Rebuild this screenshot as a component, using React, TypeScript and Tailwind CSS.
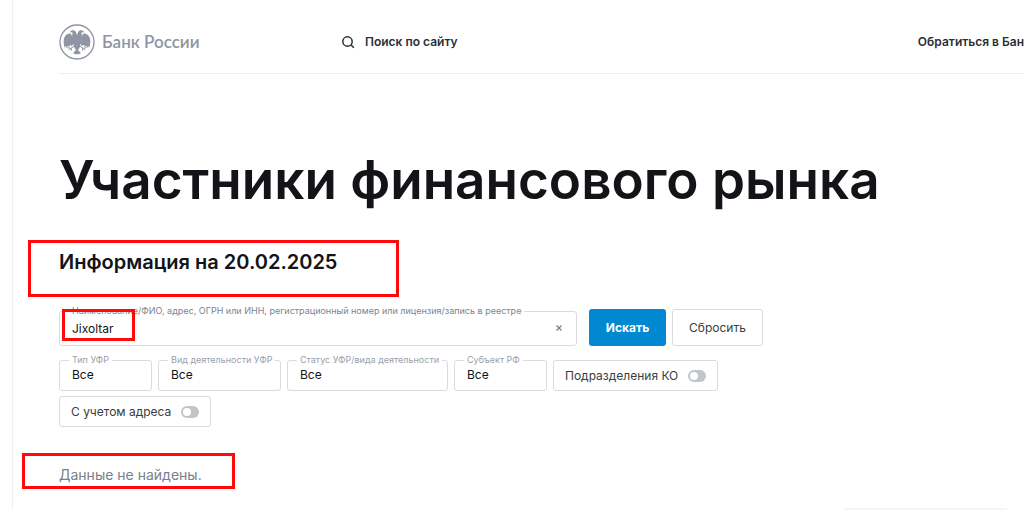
import { useState } from 'react';

const filters = [
  { id: 'type', label: 'Тип УФР', width: 'w-[93px]' },
  { id: 'activity', label: 'Вид деятельности УФР', width: 'w-[123px]' },
  { id: 'status', label: 'Статус УФР/вида деятельности', width: 'w-[161px]' },
  { id: 'region', label: 'Субъект РФ', width: 'w-[93px]' },
];

const Logo = () => (
  <a href="#" className="flex items-center gap-[7px] text-[#8f95a3]">
    <svg viewBox="0 0 108 108" className="size-9 shrink-0" aria-hidden="true">
      <circle cx="54" cy="54" r="51" fill="none" stroke="currentColor" strokeWidth="4" />
      <g fill="currentColor">
        {/* Heads and body */}
        <path d="M54 34 C52 28 51 21 44 19 C39 18 35 20 32 25 L39 25 C42 28 41 31 38 36 C42 39 44 43 44 47 L44 66 C46 72 50 75 51 78 L42 87 C47 92 61 92 66 87 L57 78 C58 75 62 72 64 66 L64 47 C64 43 66 39 70 36 C67 31 66 28 69 25 L76 25 C73 20 69 18 64 19 C57 21 56 28 54 34 Z" />
        {/* Wings */}
        <path d="M36 29 C25 26 15 36 14 50 C14 60 15 66 18 72 L20 66 L24 72 L26 65 L31 69 L33 62 L38 66 L46 58 L46 42 C42 41 38 36 36 29 Z" />
        <path d="M72 29 C83 26 93 36 94 50 C94 60 93 66 90 72 L88 66 L84 72 L82 65 L77 69 L75 62 L70 66 L62 58 L62 42 C66 41 70 36 72 29 Z" />
      </g>
      {/* Claws */}
      <g fill="none" stroke="currentColor" strokeWidth="3">
        <path d="M46 66 L36 73 L25 71 M36 73 L30 79 M36 73 L38 80" />
        <path d="M62 66 L72 73 L83 71 M72 73 L78 79 M72 73 L70 80" />
      </g>
    </svg>
    <span className="font-[Lato,sans-serif] text-[17px] leading-6 whitespace-nowrap">Банк России</span>
  </a>
);

const Toggle = ({ id, label }: { id: string; label: string }) => (
  <label htmlFor={id} className="flex h-[31px] items-center gap-[10px] rounded-[3px] border border-[#d9dbde] px-[11px] text-[12px] text-[#3a3d42] whitespace-nowrap">
    {label}
    <span className="relative flex">
      <input id={id} type="checkbox" className="peer h-3 w-[18px] appearance-none rounded-full bg-[#c1c5ca] checked:bg-[#0088d0]" />
      <span className="pointer-events-none absolute top-[2px] left-[2px] size-2 rounded-full bg-white peer-checked:left-2" />
    </span>
  </label>
);

export default function App() {
  const [query, setQuery] = useState('Jixoltar');

  return (
    <div className="relative ml-3 min-h-screen overflow-hidden border-l border-[#f0f1f2] bg-white pl-[46px] font-[Inter,sans-serif] text-[#121417]">
      <header className="flex h-[74px] items-center border-b border-[#ececee] pt-[10px] text-[12px] font-semibold text-[#2b2f36]">
        <div className="w-[282px] shrink-0">
          <Logo />
        </div>
        <button type="button" className="flex items-center gap-[10px] whitespace-nowrap">
          <svg viewBox="0 0 14 14" className="size-[14px]" fill="none" stroke="currentColor" strokeWidth="1.5" aria-hidden="true">
            <circle cx="6.5" cy="6.5" r="4.7" />
            <path d="M10 10 L12.8 12.8" />
          </svg>
          Поиск по сайту
        </button>
        <a href="#" className="ml-auto shrink-0 whitespace-nowrap">Обратиться в Бан</a>
      </header>

      <main>
        <h1 className="mt-[74px] text-[53px] leading-[64px] font-semibold whitespace-nowrap">
          Участники финансового рынка
        </h1>
        <h2 className="mt-[34px] text-[20px] leading-8 font-semibold">Информация на 20.02.2025</h2>

        <form className="mt-7 max-w-[704px]" onSubmit={(e) => e.preventDefault()}>
          <div className="flex items-end gap-[6px]">
            <fieldset className="mr-[6px] h-10 min-w-0 flex-1 rounded-[3px] border border-[#d9dbde] px-[9px]">
              <legend className="px-[3px] text-[9px] leading-[10px] text-[#7d848e] whitespace-nowrap">
                <label htmlFor="query">Наименование/ФИО, адрес, ОГРН или ИНН, регистрационный номер или лицензия/запись в реестре</label>
              </legend>
              <div className="flex items-center pr-1 pl-[3px]">
                <input
                  id="query"
                  type="text"
                  value={query}
                  onChange={(e) => setQuery(e.target.value)}
                  className="h-6 min-w-0 flex-1 text-[12px] outline-none"
                />
                <button type="button" aria-label="Очистить" className="text-[#7d848e]" onClick={() => setQuery('')}>
                  <svg viewBox="0 0 8 8" className="size-2" stroke="currentColor" strokeWidth="1.4" aria-hidden="true">
                    <path d="M1.5 1.5 L6.5 6.5 M6.5 1.5 L1.5 6.5" />
                  </svg>
                </button>
              </div>
            </fieldset>
            <button type="submit" className="h-[37px] w-[77px] rounded-[3px] bg-[#0088d0] text-[12px] font-bold text-white">
              Искать
            </button>
            <button type="reset" className="h-[37px] w-[91px] rounded-[3px] border border-[#d9dbde] text-[12px] text-[#3a3d42]">
              Сбросить
            </button>
          </div>

          <div className="mt-[9px] flex flex-wrap items-end gap-x-[6px] gap-y-[5px]">
            {filters.map((f) => (
              <fieldset key={f.id} className={`h-9 min-w-0 rounded-[3px] border border-[#d9dbde] px-[9px] ${f.width}`}>
                <legend className="px-[3px] text-[9px] leading-[10px] text-[#9aa0a8] whitespace-nowrap">
                  <label htmlFor={f.id}>{f.label}</label>
                </legend>
                <select id={f.id} className="block h-5 w-full appearance-none pl-[3px] text-[12px] leading-5 outline-none">
                  <option>Все</option>
                </select>
              </fieldset>
            ))}
            <Toggle id="branches" label="Подразделения КО" />
            <Toggle id="address" label="С учетом адреса" />
          </div>
        </form>

        <p className="mt-[38px] text-[14px] leading-5 text-[#79808b]">Данные не найдены.</p>
        <div className="mt-[23px] mr-4 ml-auto h-1 w-[165px] rounded-t-sm bg-[#f5f5f6]" />
      </main>

      {/* Highlight frames */}
      <div className="pointer-events-none absolute top-[240px] left-[15px] h-[57px] w-[371px] border-3 border-[#ff0a0a]" />
      <div className="pointer-events-none absolute top-[309px] left-[49px] h-[32px] w-[73px] border-3 border-[#ff0a0a]" />
      <div className="pointer-events-none absolute top-[453px] left-[9px] h-[36px] w-[213px] border-3 border-[#ff0a0a]" />
    </div>
  );
}
